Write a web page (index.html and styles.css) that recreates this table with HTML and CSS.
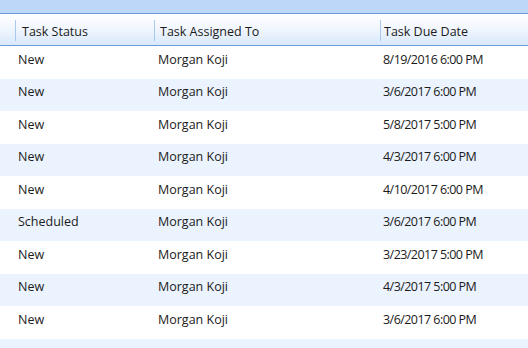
FILE: index.html
```html
<!DOCTYPE html>
<html>
<head>
<meta charset="utf-8">
<link rel="stylesheet" href="styles.css">
</head>
<body>
<div class="grid">
  <div class="topband"></div>
  <div class="header">
    <div class="hcell h1"><span>Task Status</span></div>
    <div class="hcell h2"><span>Task Assigned To</span></div>
    <div class="hcell h3"><span>Task Due Date</span></div>
  </div>
  <div class="rows">
    <div class="row"><div class="c1">New</div><div class="c2">Morgan Koji</div><div class="c3">8/19/2016 6:00 PM</div></div>
    <div class="row alt"><div class="c1">New</div><div class="c2">Morgan Koji</div><div class="c3">3/6/2017 6:00 PM</div></div>
    <div class="row"><div class="c1">New</div><div class="c2">Morgan Koji</div><div class="c3">5/8/2017 5:00 PM</div></div>
    <div class="row alt"><div class="c1">New</div><div class="c2">Morgan Koji</div><div class="c3">4/3/2017 6:00 PM</div></div>
    <div class="row"><div class="c1">New</div><div class="c2">Morgan Koji</div><div class="c3">4/10/2017 6:00 PM</div></div>
    <div class="row alt"><div class="c1">Scheduled</div><div class="c2">Morgan Koji</div><div class="c3">3/6/2017 6:00 PM</div></div>
    <div class="row"><div class="c1">New</div><div class="c2">Morgan Koji</div><div class="c3">3/23/2017 5:00 PM</div></div>
    <div class="row alt"><div class="c1">New</div><div class="c2">Morgan Koji</div><div class="c3">4/3/2017 5:00 PM</div></div>
    <div class="row"><div class="c1">New</div><div class="c2">Morgan Koji</div><div class="c3">3/6/2017 6:00 PM</div></div>
    <div class="row alt last"><div class="c1"></div><div class="c2"></div><div class="c3">4/4/2017 6:00 PM</div></div>
  </div>
</div>
</body>
</html>
```

FILE: styles.css
```css
html, body {
  margin: 0;
  padding: 0;
  background: #ffffff;
  overflow: hidden;
}
body {
  width: 528px;
  height: 348px;
  font-family: "Open Sans", "Noto Sans", sans-serif;
  font-size: 12.5px;
  color: #1b1b1b;
}
.grid {
  display: flex;
  flex-direction: column;
}
.topband {
  height: 13px;
  background: #bdd7f8;
  border-bottom: 1px solid #6c9bd9;
}
.header {
  height: 31px;
  display: flex;
  padding-left: 15px;
  background: linear-gradient(to bottom, #ffffff 0%, #f2f7fe 45%, #d9e8fb 100%);
  border-bottom: 1px solid #6c9bd9;
}
.hcell {
  display: flex;
  align-items: center;
  margin: 6px 0 4px;
  padding-top: 1px;
  border-left: 1px solid #a9c8ee;
  box-sizing: border-box;
}
.h1 { width: 139px; padding-left: 6px; }
.h2 { width: 226px; padding-left: 5px; }
.h3 { flex: 1; padding-left: 3px; }
.rows {
  display: flex;
  flex-direction: column;
}
.row {
  height: 32.5px;
  display: flex;
  align-items: center;
  flex-shrink: 0;
  padding-bottom: 6px;
  box-sizing: border-box;
}
.row.alt {
  background: #ebf3fe;
}
.row.last {
  padding-bottom: 0;
}
.c1 { width: 154px; padding-left: 18px; box-sizing: border-box; }
.c2 { width: 226px; padding-left: 4px; box-sizing: border-box; }
.c3 { flex: 1; padding-left: 3px; letter-spacing: -0.55px; }
```
